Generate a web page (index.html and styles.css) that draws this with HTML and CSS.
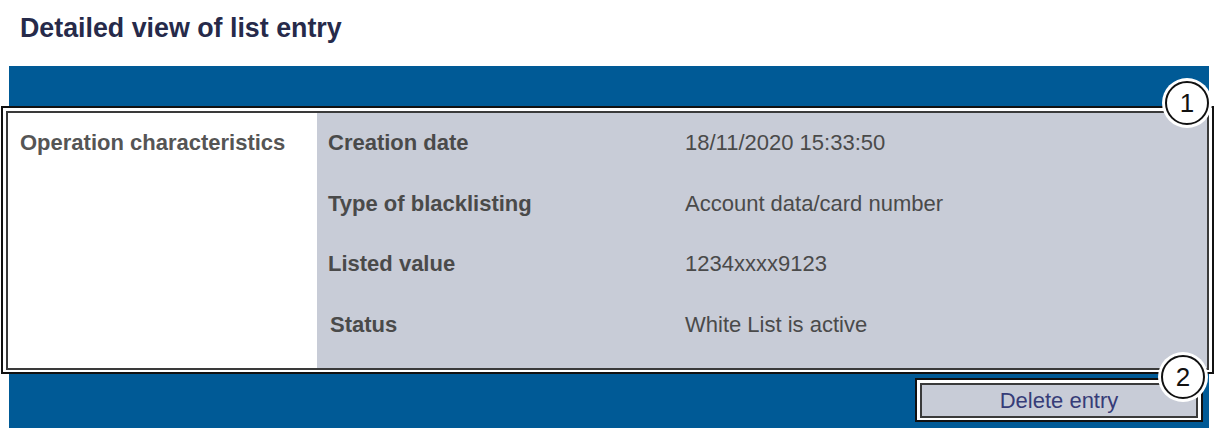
FILE: index.html
```html
<!DOCTYPE html>
<html lang="en">
<head>
  <meta charset="UTF-8">
  <title>Detailed view of list entry</title>
  <link rel="stylesheet" href="styles.css">
</head>
<body>
  <h1 class="page-title">Detailed view of list entry</h1>

  <div class="panel">
    <div class="callout">
      <div class="callout-inner detail">
        <div class="section-name">Operation characteristics</div>
        <div class="fields">
          <div class="field">
            <span class="field-label">Creation date</span>
            <span class="field-value">18/11/2020 15:33:50</span>
          </div>
          <div class="field">
            <span class="field-label">Type of blacklisting</span>
            <span class="field-value">Account data/card number</span>
          </div>
          <div class="field">
            <span class="field-label">Listed value</span>
            <span class="field-value">1234xxxx9123</span>
          </div>
          <div class="field">
            <span class="field-label status">Status</span>
            <span class="field-value">White List is active</span>
          </div>
        </div>
      </div>
      <span class="marker marker-1">1</span>
    </div>

    <div class="panel-footer">
      <div class="callout button-callout">
        <button class="callout-inner delete-btn" type="button">Delete entry</button>
        <span class="marker marker-2">2</span>
      </div>
    </div>
  </div>
</body>
</html>
```

FILE: styles.css
```css
body {
  font-family: 'Liberation Sans', Arial, sans-serif;
  margin: 0;
  padding: 0;
  background-color: white;
}
.page-title {
  margin: 0;
  padding: 12px 0 0 20px;
  font-size: 26.8px;
  line-height: 32px;
  font-weight: bold;
  color: #262a4a;
}
.panel {
  background-color: #005a96; /* Blue */
  margin: 22px 0 0 9px;
  width: 1200px;
  padding-top: 40px;
}

/* annotation frame: black line, white gap, dark line */
.callout {
  position: relative;
  border: 2px solid #111;
  padding: 3px 3px 2px 3px;
  background-color: white;
}
.callout-inner {
  border: 2px solid #3a3a3a;
}
.panel > .callout {
  margin-left: -8px;
  width: 1203px;
}
.detail {
  display: flex;
  height: 255px;
}
.section-name {
  width: 297px;
  padding: 18px 0 0 12px;
  font-size: 22px;
  font-weight: bold;
  color: #555;
  line-height: 24px;
  background-color: white;
}
.fields {
  flex: 1;
  background-color: #c8ccd7; /* Light grey */
  padding-left: 11px;
}
.field {
  display: flex;
  height: 60.5px;
  align-items: center;
  font-size: 22px;
}
.field-label {
  width: 357px;
  font-weight: bold;
  color: #4a4a4a;
}
.field-label.status {
  padding-left: 2px;
  width: 355px;
}
.field-value {
  color: #4a4a4a;
}

.panel-footer {
  display: flex;
  justify-content: flex-end;
  padding: 4px 6px 6px 0;
}
.button-callout {
  width: 278px;
}
.delete-btn {
  display: block;
  width: 100%;
  height: 35px;
  background-color: #c8ccd7;
  font-family: 'Liberation Sans', Arial, sans-serif;
  font-size: 22px;
  color: #363c78;
  padding: 0;
  cursor: pointer;
}

/* numbered markers */
.marker {
  position: absolute;
  width: 40px;
  height: 40px;
  border: 2px solid #111;
  border-radius: 50%;
  background-color: white;
  box-shadow: 0 0 0 3px white;
  font-size: 26px;
  line-height: 40px;
  text-align: center;
  color: #111;
}
.marker-1 {
  right: 3px;
  top: -27px;
}
.marker-2 {
  right: -4px;
  top: -25px;
}
```
